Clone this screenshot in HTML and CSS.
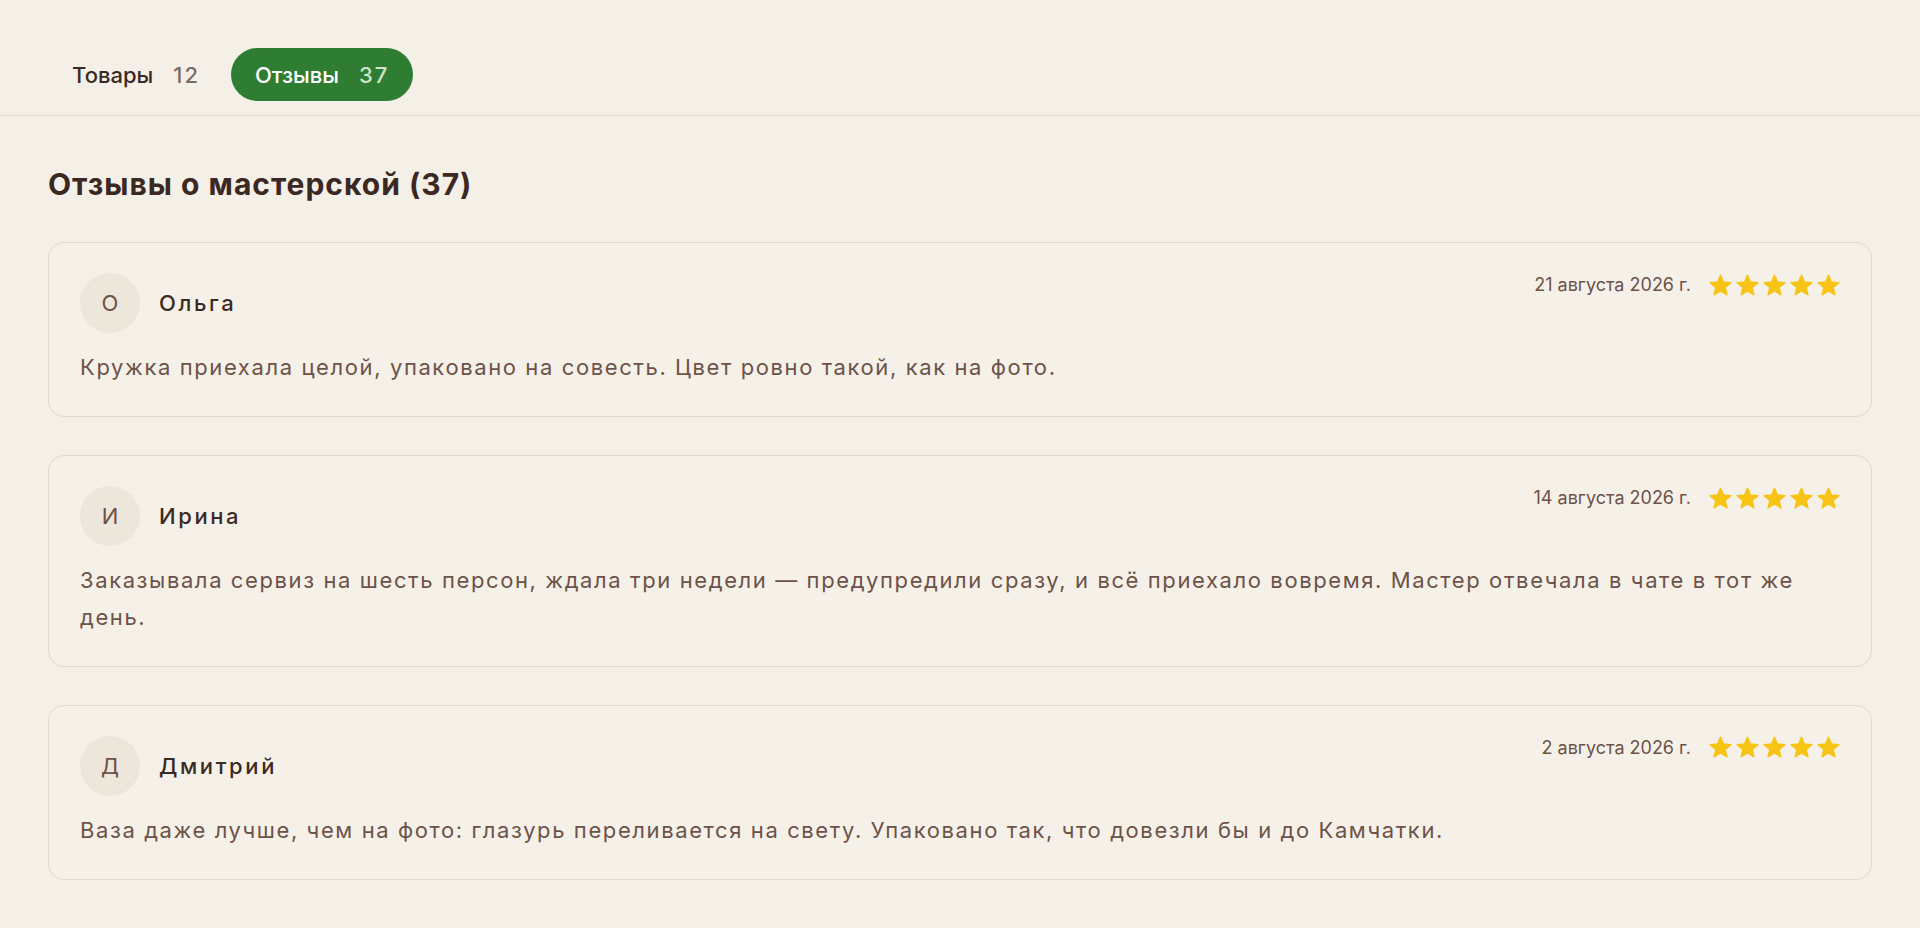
FILE: index.html
```html
<!DOCTYPE html>
<html lang="ru">
<head>
<meta charset="utf-8">
<title>Отзывы о мастерской</title>
<link rel="stylesheet" href="styles.css">
</head>
<body>
<nav class="tabs">
  <a class="tab" href="#">Товары <span class="tab-count">12</span></a>
  <a class="tab tab-active" href="#">Отзывы <span class="tab-count">37</span></a>
</nav>
<main class="content">
  <h1 class="title">Отзывы о мастерской (37)</h1>
  <section class="reviews">
    <article class="review">
      <header class="review-head">
        <div class="author">
          <div class="avatar">О</div>
          <div class="name">Ольга</div>
        </div>
        <div class="meta">
          <span class="date">21 августа 2026 г.</span>
          <div class="stars">
            <svg viewBox="0 0 24 24"><path d="M12 17.27L18.18 21l-1.64-7.03L22 9.24l-7.19-.61L12 2 9.19 8.630 2 9.24l5.46 4.73L5.82 21z"/></svg>
            <svg viewBox="0 0 24 24"><path d="M12 17.27L18.18 21l-1.64-7.03L22 9.24l-7.19-.61L12 2 9.19 8.63 2 9.24l5.46 4.73L5.82 21z"/></svg>
            <svg viewBox="0 0 24 24"><path d="M12 17.27L18.18 21l-1.64-7.03L22 9.24l-7.19-.61L12 2 9.19 8.63 2 9.24l5.46 4.73L5.82 21z"/></svg>
            <svg viewBox="0 0 24 24"><path d="M12 17.27L18.18 21l-1.64-7.03L22 9.24l-7.19-.61L12 2 9.19 8.63 2 9.24l5.46 4.73L5.82 21z"/></svg>
            <svg viewBox="0 0 24 24"><path d="M12 17.27L18.18 21l-1.64-7.03L22 9.24l-7.19-.61L12 2 9.19 8.63 2 9.24l5.46 4.73L5.82 21z"/></svg>
          </div>
        </div>
      </header>
      <p class="text">Кружка приехала целой, упаковано на совесть. Цвет ровно такой, как на фото.</p>
    </article>
    <article class="review">
      <header class="review-head">
        <div class="author">
          <div class="avatar">И</div>
          <div class="name">Ирина</div>
        </div>
        <div class="meta">
          <span class="date">14 августа 2026 г.</span>
          <div class="stars">
            <svg viewBox="0 0 24 24"><path d="M12 17.27L18.18 21l-1.64-7.03L22 9.24l-7.19-.61L12 2 9.19 8.63 2 9.24l5.46 4.73L5.82 21z"/></svg>
            <svg viewBox="0 0 24 24"><path d="M12 17.27L18.18 21l-1.64-7.03L22 9.24l-7.19-.61L12 2 9.19 8.63 2 9.24l5.46 4.73L5.82 21z"/></svg>
            <svg viewBox="0 0 24 24"><path d="M12 17.27L18.18 21l-1.64-7.03L22 9.24l-7.19-.61L12 2 9.19 8.63 2 9.24l5.46 4.73L5.82 21z"/></svg>
            <svg viewBox="0 0 24 24"><path d="M12 17.27L18.18 21l-1.64-7.03L22 9.24l-7.19-.61L12 2 9.19 8.63 2 9.24l5.46 4.73L5.82 21z"/></svg>
            <svg viewBox="0 0 24 24"><path d="M12 17.27L18.18 21l-1.64-7.03L22 9.24l-7.19-.61L12 2 9.19 8.63 2 9.24l5.46 4.73L5.82 21z"/></svg>
          </div>
        </div>
      </header>
      <p class="text">Заказывала сервиз на шесть персон, ждала три недели — предупредили сразу, и всё приехало вовремя. Мастер отвечала в чате в тот же день.</p>
    </article>
    <article class="review">
      <header class="review-head">
        <div class="author">
          <div class="avatar">Д</div>
          <div class="name">Дмитрий</div>
        </div>
        <div class="meta">
          <span class="date">2 августа 2026 г.</span>
          <div class="stars">
            <svg viewBox="0 0 24 24"><path d="M12 17.27L18.18 21l-1.64-7.03L22 9.24l-7.19-.61L12 2 9.19 8.63 2 9.24l5.46 4.73L5.82 21z"/></svg>
            <svg viewBox="0 0 24 24"><path d="M12 17.27L18.18 21l-1.64-7.03L22 9.24l-7.19-.61L12 2 9.19 8.63 2 9.24l5.46 4.73L5.82 21z"/></svg>
            <svg viewBox="0 0 24 24"><path d="M12 17.27L18.18 21l-1.64-7.03L22 9.24l-7.19-.61L12 2 9.19 8.63 2 9.24l5.46 4.73L5.82 21z"/></svg>
            <svg viewBox="0 0 24 24"><path d="M12 17.27L18.18 21l-1.64-7.03L22 9.24l-7.19-.61L12 2 9.19 8.63 2 9.24l5.46 4.73L5.82 21z"/></svg>
            <svg viewBox="0 0 24 24"><path d="M12 17.27L18.18 21l-1.64-7.03L22 9.24l-7.19-.61L12 2 9.19 8.63 2 9.24l5.46 4.73L5.82 21z"/></svg>
          </div>
        </div>
      </header>
      <p class="text">Ваза даже лучше, чем на фото: глазурь переливается на свету. Упаковано так, что довезли бы и до Камчатки.</p>
    </article>
  </section>
</main>
</body>
</html>
```

FILE: styles.css
```css
* { box-sizing: border-box; }

html, body {
  margin: 0;
  padding: 0;
}

body {
  background: #f4f0e7;
  font-family: Inter, "Noto Sans", "Liberation Sans", sans-serif;
  color: #3b2a24;
  -webkit-font-smoothing: antialiased;
}

.tabs {
  display: flex;
  align-items: center;
  gap: 7px;
  padding: 48px 48px 14px;
  border-bottom: 1px solid #e3d9ca;
}

.tab {
  display: inline-flex;
  align-items: center;
  gap: 20px;
  height: 53px;
  padding: 0 24px;
  border-radius: 27px;
  font-size: 22px;
  font-weight: 500;
  color: #3b2a24;
  text-decoration: none;
}

.tab-count {
  font-weight: 500;
  letter-spacing: 2px;
  color: #7d6c64;
}

.tab-active {
  background: #2e7d32;
  color: #ffffff;
}

.tab-active .tab-count {
  color: #cfe3cb;
}

.content {
  padding: 50px 48px 0;
}

.title {
  margin: 0 0 40px;
  font-size: 30px;
  line-height: 36px;
  font-weight: 700;
  letter-spacing: 1px;
  color: #3b2822;
}

.reviews {
  display: flex;
  flex-direction: column;
  gap: 38px;
}

.review {
  background: #f5f1e9;
  border: 1px solid #e2d9ca;
  border-radius: 16px;
  padding: 30px 30px 31px 31px;
}

.review-head {
  display: flex;
  justify-content: space-between;
  align-items: flex-start;
}

.author {
  display: flex;
  align-items: center;
  gap: 19px;
}

.avatar {
  width: 60px;
  height: 60px;
  border-radius: 50%;
  background: #ede6da;
  display: flex;
  align-items: center;
  justify-content: center;
  font-size: 22px;
  color: #6d5248;
}

.name {
  font-size: 22px;
  font-weight: 500;
  letter-spacing: 2.6px;
  color: #3b2a24;
}

.meta {
  display: flex;
  align-items: center;
  gap: 17px;
  height: 24px;
}

.date {
  font-size: 18px;
  line-height: 24px;
  color: #6d5248;
}

.stars {
  display: flex;
  gap: 2px;
}

.stars svg {
  width: 25px;
  height: 25px;
  fill: #f7c415;
  stroke: #f7c415;
  stroke-width: 1.3;
  stroke-linejoin: round;
}

.text {
  margin: 16px 0 0;
  font-size: 22px;
  line-height: 1.65;
  letter-spacing: 1.6px;
  color: #6d5248;
}
```
